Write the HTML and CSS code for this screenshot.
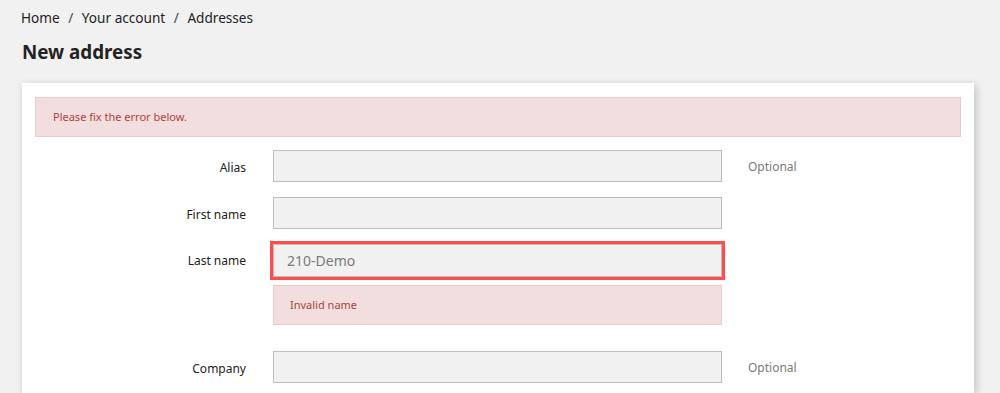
FILE: index.html
```html
<!DOCTYPE html>
<html lang="en">
<head>
    <meta charset="UTF-8">
    <title>New address</title>
    <link rel="stylesheet" href="styles.css">
</head>
<body>
    <nav class="breadcrumb">
        <a href="#">Home</a>
        <span class="sep">/</span>
        <a href="#">Your account</a>
        <span class="sep">/</span>
        <a href="#">Addresses</a>
    </nav>

    <h1 class="page-title">New address</h1>

    <section class="card">
        <div class="alert">Please fix the error below.</div>

        <form class="address-form">
            <div class="form-row">
                <label class="form-label">Alias</label>
                <input type="text" class="form-input">
                <span class="form-comment">Optional</span>
            </div>

            <div class="form-row">
                <label class="form-label">First name</label>
                <input type="text" class="form-input">
                <span class="form-comment"></span>
            </div>

            <div class="form-row has-error">
                <label class="form-label">Last name</label>
                <div class="field">
                    <input type="text" class="form-input" value="210-Demo">
                    <div class="field-error">Invalid name</div>
                </div>
                <span class="form-comment"></span>
            </div>

            <div class="form-row">
                <label class="form-label">Company</label>
                <input type="text" class="form-input">
                <span class="form-comment">Optional</span>
            </div>
        </form>
    </section>
</body>
</html>
```

FILE: styles.css
```css
body {
    margin: 0;
    padding: 8px 26px 0 22px;
    background: #f1f1f1;
    font-family: "Noto Sans", "Open Sans", sans-serif;
    color: #232323;
}

.breadcrumb {
    font-size: 13.6px;
    line-height: 20px;
    margin-left: -1px;
}

.breadcrumb a {
    color: #232323;
    text-decoration: none;
}

.breadcrumb .sep {
    margin: 0 5px;
    color: #444;
}

.page-title {
    font-size: 18.8px;
    font-weight: 700;
    line-height: 24px;
    margin: 12px 0 19px;
}

.card {
    background: #fff;
    padding: 14px 13px 10px;
    box-shadow: 2px 2px 8px 0 rgba(0, 0, 0, 0.2);
}

.alert {
    background: #f2dede;
    border: 1px solid #ebcccc;
    color: #a94442;
    font-size: 11px;
    line-height: 38px;
    padding: 0 17px;
    margin-bottom: 13px;
}

.address-form {
    display: flex;
    flex-direction: column;
    gap: 15px;
}

.form-row {
    display: grid;
    grid-template-columns: 211px 449px auto;
    column-gap: 27px;
    align-items: start;
    font-size: 12px;
}

.form-label {
    box-sizing: border-box;
    height: 32px;
    text-align: right;
    line-height: 32px;
    padding-top: 2px;
}

.form-input {
    box-sizing: border-box;
    width: 449px;
    height: 32px;
    margin: 0;
    padding: 0 13px;
    border: 1px solid #bdbdbd;
    background: #f1f1f1;
    font-family: inherit;
    font-size: 14px;
    color: #7a7a7a;
}

.form-comment {
    box-sizing: border-box;
    height: 32px;
    color: #7a7a7a;
    font-size: 12px;
    line-height: 32px;
    padding-top: 1px;
    margin-left: -1px;
}

.has-error {
    margin-bottom: 11px;
}

.has-error .form-label {
    height: 33px;
    line-height: 33px;
    padding-top: 0;
}

.has-error .form-input {
    height: 33px;
    outline: 3px solid #ff4c4c;
}

.field-error {
    margin-top: 8px;
    background: #f2dede;
    border: 1px solid #ebcccc;
    color: #a94442;
    font-size: 11px;
    line-height: 38px;
    padding: 0 16px;
}
```
